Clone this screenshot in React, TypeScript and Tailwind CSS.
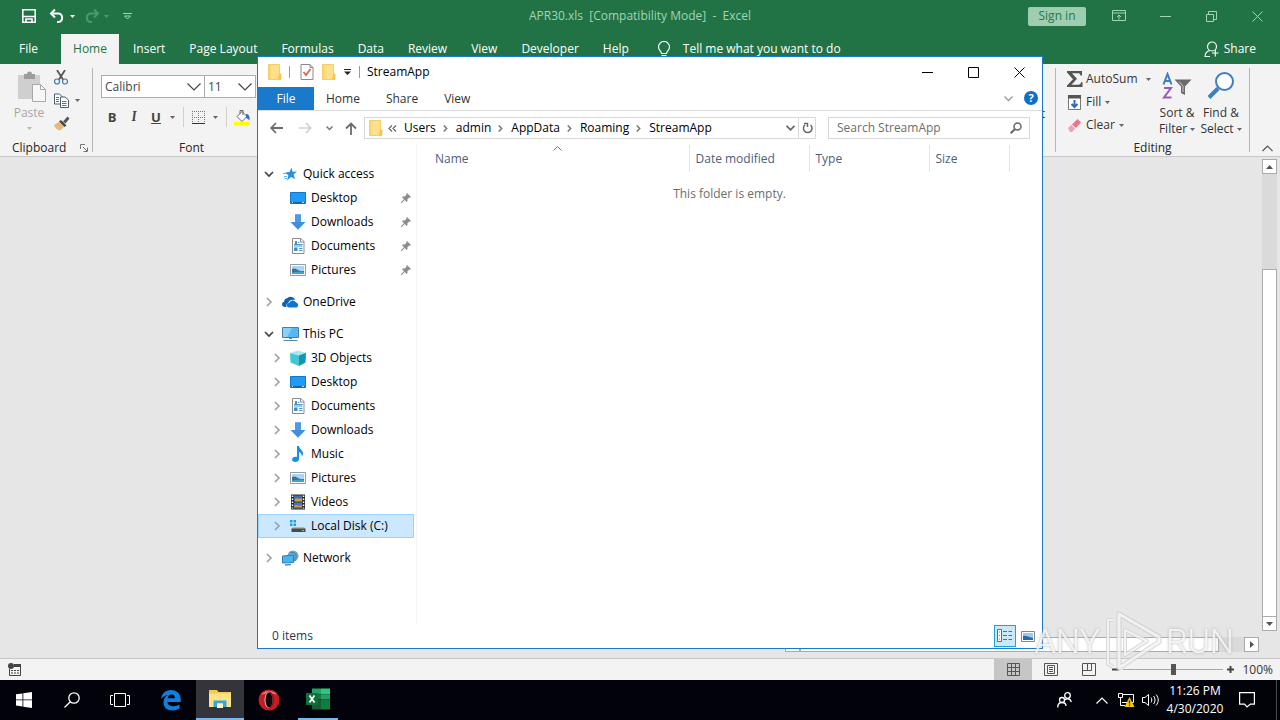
import React, { useState } from 'react';

interface IconProps {
  className?: string;
}

/* ---------- small shared glyphs ---------- */

const Caret = ({ className = 'text-[#666666]' }: IconProps) => (
  <svg width="5" height="3" viewBox="0 0 5 3" className={`shrink-0 ${className}`}>
    <path d="M0 0h5L2.5 3z" fill="currentColor" />
  </svg>
);

const Chevron = ({ open = false }: { open?: boolean }) => (
  <svg width="10" height="10" viewBox="0 0 10 10" fill="none" className="shrink-0">
    {open ? (
      <path d="M1 3l4 4 4-4" stroke="#404040" strokeWidth="1.7" />
    ) : (
      <path d="M3 1l4 4-4 4" stroke="#a0a0a0" strokeWidth="1.7" />
    )}
  </svg>
);

const FolderIcon = () => (
  <svg width="14" height="16" viewBox="0 0 14 16" className="shrink-0">
    <path d="M.5.500h11V10H13v5.500H.5z" fill="#ffe08a" stroke="#ecc55a" strokeWidth=".8" />
    <path d="M.5 1h2v14h-2z" fill="#fbd36b" />
    <path d="M11 10h2v5.500h-3z" fill="#f5c451" />
  </svg>
);

/* ---------- tree icons ---------- */

const StarIcon = () => (
  <svg width="16" height="16" viewBox="0 0 16 16">
    <path d="M9.500 1.500l1 4.300 4.500-.3-3.500 3.100 1.700 4.400L9 10.900 5 14.500l1.400-5L3 6.500l4.500-.4z" fill="#2a8fdc" />
    <path d="M1 7.500h4M2 10.500h3M2.500 12.500h2.500" stroke="#63b8f0" />
  </svg>
);

const DesktopIcon = () => (
  <svg width="16" height="16" viewBox="0 0 16 16">
    <path d="M.5 2.500h15v11H.5z" fill="#1e9bf5" stroke="#1378c8" />
    <path d="M1 12h14v1.500H1z" fill="#0d65b0" />
    <path d="M2 12.500h1M12 12.500h2" stroke="#bfe3ff" />
  </svg>
);

const DownloadIcon = () => (
  <svg width="16" height="16" viewBox="0 0 16 16">
    <path d="M5 .5h6V8h4.500L8 15.700.5 8H5z" fill="#3f8fdd" />
    <path d="M5 .5h6V8H5z" fill="#4a9ae4" />
  </svg>
);

const DocumentIcon = () => (
  <svg width="16" height="16" viewBox="0 0 16 16" fill="none">
    <path d="M2.500.500h8.500l3 3v12H2.500z" fill="#fff" stroke="#8a8a8a" />
    <path d="M10.500.500V4H14" stroke="#8a8a8a" />
    <path d="M5 3h2v3H5zM4 9.500h3.500V13H4z" fill="#3f8fc8" />
    <path d="M8 4.500h1.500M4 6.500h8.500M4 8h8.500M9 10.500h3.500M9 12.500h3.500" stroke="#4a95c8" />
  </svg>
);

const PictureIcon = () => (
  <svg width="16" height="16" viewBox="0 0 16 16">
    <path d="M.5 2.500h15v11H.5z" fill="#fff" stroke="#9a9a9a" />
    <path d="M2 4h12v8H2z" fill="#a9d4f5" />
    <path d="M2 7c3-1.500 5 .5 7 1.500s4 .5 5 .5v3H2z" fill="#39738f" />
    <path d="M2 10.500c4-1 8-1 12-.5v2H2z" fill="#4c9bd3" />
  </svg>
);

const CloudIcon = () => (
  <svg width="17" height="16" viewBox="0 0 17 16">
    <path d="M2.500 13A2.700 2.700 0 0 1 2 7.700 4.300 4.300 0 0 1 5.500 4a5 5 0 0 1 7.800 2C9 5 6.500 7 6.300 9.300 4.500 9.500 4 11.500 4.600 13z" fill="#0a64b4" />
    <path d="M7 13.500a2.300 2.300 0 0 1 .2-4.600A3.700 3.700 0 0 1 14 8.500a2.600 2.600 0 0 1 .5 5z" fill="#0f74cc" />
  </svg>
);

const PcIcon = () => (
  <svg width="17" height="16" viewBox="0 0 17 16">
    <path d="M.5 1.500h16v10H.5z" fill="#56b7f5" stroke="#4a7ea6" />
    <path d="M1 2h9L5 11H1z" fill="#8bd0fb" />
    <path d="M1.500 14.500h14M7 12.500h3" stroke="#5b86a8" />
  </svg>
);

const CubeIcon = () => (
  <svg width="16" height="16" viewBox="0 0 16 16">
    <path d="M0 3l7.500-2.500L16 2.800 9 5.500z" fill="#a6e8ef" />
    <path d="M0 3l9 2.500V16L.5 12.500z" fill="#45c6d8" />
    <path d="M16 2.800L9 5.500V16l6.500-3.500z" fill="#1595ab" />
  </svg>
);

const MusicIcon = () => (
  <svg width="16" height="16" viewBox="0 0 16 16">
    <path d="M7 0h2c.2 3 4 4 4 7.500 0 1.500-.7 2.500-1.200 3C12 8 10.500 6.500 9 6v7c0 1.700-1.600 3-3.600 3S2 15 2 13.500 3.700 10.700 5.500 10.700c.6 0 1 .1 1.500.3z" fill="#148fe6" />
  </svg>
);

const VideoIcon = () => (
  <svg width="16" height="16" viewBox="0 0 16 16">
    <path d="M1 .5h14v15H1z" fill="#2b2b2b" />
    <path d="M4 1.500h8v6H4z" fill="#3e6fae" />
    <path d="M4 8.500h8v6H4z" fill="#5172c2" />
    <path d="M5 5c2-2 4 1 7-1v3.500H5zM4 12c3-2 5 1 8-1v2H4z" fill="#c9a23a" />
    <path d="M2.500 1.500v13M13.500 1.500v13" stroke="#fff" strokeWidth="1.500" strokeDasharray="1.500 1.500" />
  </svg>
);

const DiskIcon = () => (
  <svg width="16" height="16" viewBox="0 0 16 16">
    <path d="M0 2h2.500v2.500H0zM3.500 2H6v2.500H3.500zM0 5.500h2.500V8H0zM3.500 5.500H6V8H3.500z" fill="#1ba1e2" />
    <path d="M3 9h11l1.500 2H1.500z" fill="#b8b8b8" />
    <path d="M1.500 10.500h14V14h-14z" fill="#4a4a4a" />
    <path d="M12 12h2v1h-2z" fill="#6fe06f" />
  </svg>
);

const NetworkIcon = () => (
  <svg width="17" height="16" viewBox="0 0 17 16">
    <circle cx="11" cy="6" r="5.500" fill="#6da9cc" />
    <path d="M8 2c3 1 5 0 6 3s-2 4-1 6" stroke="#3f7ba6" fill="none" />
    <path d="M.5 6l11-1v7.500l-11 .5z" fill="#4bb4f0" stroke="#2b7db2" />
    <path d="M3 15l6-.5" stroke="#4a8fbe" strokeWidth="1.500" />
  </svg>
);

const PinIcon = () => (
  <svg width="10" height="10" viewBox="0 0 10 10" className="shrink-0">
    <path d="M6 0l4 4-1 .8-.8-.2L6.300 6.500l.2 1.700-.9.900-2-2L.8 10 0 9.900l.2-.8L3 6.300.9 4.300l1-.9 1.700.2 1.900-1.900-.2-.9z" fill="#8c8c8c" />
  </svg>
);

/* ---------- Excel ---------- */

const menuTabs = ['Insert', 'Page Layout', 'Formulas', 'Data', 'Review', 'View', 'Developer', 'Help'];

const ExcelTitleBar = () => (
  <header className="grid h-[34px] grid-cols-[1fr_auto_1fr] items-center pb-[2px] text-[#a2d5b5]">
    <div className="flex items-center pl-[21px] text-white">
      <button aria-label="Save">
        <svg width="16" height="16" viewBox="0 0 16 16" fill="none" stroke="currentColor" strokeWidth="1.600">
          <path d="M1.800 1.800h12.400v12.400H1.800zM2 8.500h12M5 14v-3h6v3" />
        </svg>
      </button>
      <button aria-label="Undo" className="ml-3 flex items-center gap-1">
        <svg width="17" height="16" viewBox="0 0 17 16" fill="none" stroke="currentColor" strokeWidth="2">
          <path d="M6 1.500L2 5.500l4 4M2.500 5.500h7a4.300 4.300 0 0 1 0 8.500H8" />
        </svg>
        <Caret className="text-white" />
      </button>
      <button aria-label="Redo" className="ml-2 flex items-center gap-1 text-[#4c9a6c]">
        <svg width="17" height="16" viewBox="0 0 17 16" fill="none" stroke="currentColor" strokeWidth="2">
          <path d="M11 1.500l4 4-4 4M14.500 5.500h-7a4.300 4.300 0 0 0 0 8.500H9" />
        </svg>
        <Caret className="text-[#4c9a6c]" />
      </button>
      <button aria-label="Customize Quick Access Toolbar" className="ml-[14px]">
        <svg width="9" height="8" viewBox="0 0 9 8" fill="none" stroke="#a2d5b5">
          <path d="M0 1.500h9M1.500 4h6L4.500 7z" />
        </svg>
      </button>
    </div>
    <h1 className="whitespace-pre">APR30.xls  [Compatibility Mode]  -  Excel</h1>
    <div className="flex items-center justify-end">
      <button className="mr-[10px] h-[19px] w-[58px] rounded-[2px] bg-[#9fcdb1] leading-4 text-[#267a4b]">Sign in</button>
      <button aria-label="Ribbon Display Options" className="flex w-[46px] justify-center">
        <svg width="14" height="12" viewBox="0 0 14 12" fill="none" stroke="currentColor">
          <path d="M.5.500h13v10H.5zM.5 3h13M7 9.500V5M5 7l2-2 2 2" />
        </svg>
      </button>
      <button aria-label="Minimize" className="flex w-[46px] justify-center">
        <svg width="11" height="11" viewBox="0 0 11 11" stroke="currentColor"><path d="M0 5.500h11" /></svg>
      </button>
      <button aria-label="Restore" className="flex w-[46px] justify-center">
        <svg width="11" height="11" viewBox="0 0 11 11" fill="none" stroke="currentColor">
          <path d="M.5 3.500h7v7h-7zM2.500 3V.500h8v8H8" />
        </svg>
      </button>
      <button aria-label="Close" className="flex w-[46px] justify-center">
        <svg width="11" height="11" viewBox="0 0 11 11" stroke="currentColor"><path d="M.5.500l10 10M10.500.500l-10 10" /></svg>
      </button>
    </div>
  </header>
);

const ExcelTabs = () => (
  <nav className="flex h-[30px] text-white">
    <button className="w-[61px] pr-1">File</button>
    <button className="mr-[2px] w-[58px] bg-[#f3f3f3] text-[#217346]">Home</button>
    {menuTabs.map((tab) => (
      <button key={tab} className="px-3">{tab}</button>
    ))}
    <button className="ml-4 flex items-center gap-3">
      <svg width="14" height="17" viewBox="0 0 14 17" fill="none" stroke="currentColor" strokeWidth="1.200">
        <path d="M4.500 12.500c0-2-3-3-3-6.500a5.500 5.500 0 0 1 11 0c0 3.500-3 4.500-3 6.500zM4.500 14.500h5M5.500 16.400h3" />
      </svg>
      Tell me what you want to do
    </button>
    <button className="mr-6 ml-auto flex items-center gap-1">
      <svg width="16" height="17" viewBox="0 0 16 17" fill="none" stroke="currentColor" strokeWidth="1.200">
        <circle cx="8" cy="5.500" r="4.500" />
        <path d="M1 16c0-4 2.500-6 5-6.500M8 12h6.500M11.300 9v6.500M1 15.500h5" />
      </svg>
      Share
    </button>
  </nav>
);

const ClipboardGroup = () => (
  <section className="my-1 flex w-[93px] flex-col border-r border-[#b5b5b5]">
    <div className="flex flex-1">
      <button className="flex w-[58px] flex-col items-center pt-[3px] text-[#a6a6a6]">
        <svg width="29" height="32" viewBox="0 0 29 32" className="ml-1">
          <path d="M1 4h22v24H1z" fill="#cfcfcf" />
          <path d="M7 3h3a2.500 2.500 0 0 1 5 0h3v5H7z" fill="#9c9c9c" />
          <path d="M15.500 13.500h8l5 5v12h-13z" fill="#f7f7f7" stroke="#a8a8a8" />
          <path d="M23.500 13.500v5h5" fill="none" stroke="#a8a8a8" />
        </svg>
        <span className="mt-[2px]">Paste</span>
        <Caret className="mt-[6px] text-[#b8b8b8]" />
      </button>
      <div className="-ml-1 flex flex-col gap-2 pt-[2px]">
        <button aria-label="Cut">
          <svg width="14" height="15" viewBox="0 0 14 15" fill="none">
            <path d="M3 0l6 9.500M11 0L5 9.500" stroke="#555" strokeWidth="1.800" />
            <circle cx="3" cy="11.500" r="2.500" stroke="#3b78b5" strokeWidth="1.200" />
            <circle cx="11" cy="11.500" r="2.500" stroke="#3b78b5" strokeWidth="1.200" />
          </svg>
        </button>
        <button aria-label="Copy" className="flex items-center gap-[6px]">
          <svg width="15" height="15" viewBox="0 0 15 15" fill="none">
            <path d="M.5 1h5l3 3v7h-8z" fill="#fff" stroke="#4b5f73" />
            <path d="M6.500 4h4.500l3.500 3v7.500h-8z" fill="#fff" stroke="#4b5f73" />
            <path d="M2 4.500h3M2 6.500h3M2 8.500h3M8 8.500h4.500M8 10.500h4.500M8 12.500h4.500" stroke="#3b78b5" />
          </svg>
          <Caret />
        </button>
        <button aria-label="Format Painter">
          <svg width="16" height="15" viewBox="0 0 16 15">
            <path d="M0 9l5-3 5 5-4 3.500c-2-.5-5-2-6-5.500z" fill="#e9b872" />
            <path d="M5 5.500l2-1.500 5.500 5.500L10.500 11z" fill="#444" />
            <path d="M9 5.500L13.500.500l2 2L11.500 7.500z" fill="#555" />
          </svg>
        </button>
      </div>
    </div>
    <div className="-mb-1 flex h-4 items-center justify-between pr-1 pl-3 text-[#262626]">
      Clipboard
      <svg width="8" height="8" viewBox="0 0 8 8" fill="none" stroke="#777">
        <path d="M.5 5V.500H5M3 3l4 4M7.500 3.500v4h-4" />
      </svg>
    </div>
  </section>
);

const FontGroup = () => (
  <section className="my-1 flex w-[197px] flex-col pl-2">
    <div className="flex pt-[7px] text-[#444444]">
      <label className="relative flex items-center">
        <select aria-label="Font" className="h-[23px] w-[104px] appearance-none border border-[#ababab] bg-white pl-[3px]">
          <option>Calibri</option>
        </select>
        <svg width="14" height="8" viewBox="0 0 14 8" className="pointer-events-none absolute right-1" fill="none" stroke="#444" strokeWidth="1.200">
          <path d="M.5.500L7 7l6.500-6.500" />
        </svg>
      </label>
      <label className="relative -ml-px flex items-center">
        <select aria-label="Font Size" className="h-[23px] w-[52px] appearance-none border border-[#ababab] bg-white pl-[3px]">
          <option>11</option>
        </select>
        <svg width="14" height="8" viewBox="0 0 14 8" className="pointer-events-none absolute right-1" fill="none" stroke="#444" strokeWidth="1.200">
          <path d="M.5.500L7 7l6.500-6.500" />
        </svg>
      </label>
    </div>
    <div className="flex h-[38px] items-center text-[13px] text-[#444444]">
      <button className="w-[22px] font-bold">B</button>
      <button className="w-[22px] font-serif font-bold italic">I</button>
      <button className="w-[22px] font-bold underline">U</button>
      <Caret className="ml-[3px] text-[#666666]" />
      <span className="ml-2 h-5 w-px bg-[#d0d0d0]" />
      <button aria-label="Borders" className="ml-2 flex items-center gap-2">
        <svg width="13" height="13" viewBox="0 0 13 13" fill="none" stroke="#777">
          <path d="M.5 0v12M6.500 0v12M12.500 0v12M0 .500h13M0 6.500h13" strokeDasharray="1 1" />
          <path d="M0 12.500h13" stroke="#333" />
        </svg>
        <Caret />
      </button>
      <span className="ml-2 h-5 w-px bg-[#d0d0d0]" />
      <button aria-label="Fill Color" className="ml-[7px]">
        <svg width="17" height="17" viewBox="0 0 17 17" fill="none">
          <path d="M3 7.500l5-5 5 5-5 5z" fill="#fff" stroke="#666" />
          <path d="M6 5V1.500h3V6" stroke="#666" />
          <path d="M12 5c3 0 4 2.500 3.500 6.500C14 10 13 9 12 9z" fill="#3b6fb5" />
          <path d="M0 13h16v3.500H0z" fill="#ffff00" />
        </svg>
      </button>
    </div>
    <div className="mt-auto -mb-1 pr-2 text-center leading-4 text-[#262626]">Font</div>
  </section>
);

const EditingGroup = () => (
  <section className="my-1 flex w-[195px] flex-col border-x border-[#b5b5b5]">
    <div className="flex flex-1 pl-[11px] text-[#333333]">
      <div className="mr-1 flex w-[84px] flex-col">
        <button className="flex h-[22px] items-center gap-[3px]">
          <svg width="16" height="16" viewBox="0 0 16 16" fill="none">
            <path d="M0 0h15v4.500h-1.500c-.3-1.800-1-2.300-3-2.300H5l5 5.600-5.500 6H11c2 0 2.700-.8 3-2.500h1.500V16H0v-1.500l6-6.300L0 1.500z" fill="#555" />
          </svg>
          AutoSum
          <Caret className="ml-auto text-[#666666]" />
        </button>
        <button className="flex h-6 items-center gap-1">
          <svg width="15" height="15" viewBox="0 0 15 15" fill="none">
            <path d="M1.500 1.500h12v13h-12z" fill="#fff" stroke="#777" />
            <path d="M1 0h13v3.500H1z" fill="#555" />
            <path d="M7.500 5v7M4.500 9l3 3 3-3" stroke="#2e6db4" strokeWidth="2" />
          </svg>
          Fill
          <Caret />
        </button>
        <button className="flex h-[22px] items-center gap-1">
          <svg width="15" height="15" viewBox="0 0 15 15">
            <path d="M5 6.500L10.500 1l3.500 3.500L9 10z" fill="#e8798c" />
            <path d="M1 10l3.300-3 3.700 3.700L5 14H3z" fill="#f1a3b0" />
          </svg>
          Clear
          <Caret />
        </button>
      </div>
      <button className="flex w-11 flex-col items-center pt-1 leading-4">
        <svg width="30" height="28" viewBox="0 0 30 28" className="mb-[5px] shrink-0" fill="none">
          <path d="M1.500 12.500L5.500 2l4 10.500M3 9h5" stroke="#3f7fbf" strokeWidth="2" />
          <path d="M2 16h7l-7 9.500h7.500" stroke="#9a5ab5" strokeWidth="2" />
          <path d="M12.500 7.500h17l-6.500 7V23l-4-2v-6.500z" fill="#6b6b6b" />
          <path d="M17 9.500l4 4.500v6" stroke="#c9c9c9" />
        </svg>
        <span className="whitespace-nowrap">Sort &amp;</span>
        <span className="flex items-center gap-[3px]">Filter <Caret /></span>
      </button>
      <button className="flex w-11 flex-col items-center pt-1 leading-4">
        <svg width="28" height="28" viewBox="0 0 28 28" className="mb-[5px] shrink-0" fill="none">
          <path d="M11 16.500L2 25.500" stroke="#3f7fbf" strokeWidth="4" />
          <circle cx="17.500" cy="9.500" r="8.500" fill="#fff" stroke="#3f7fbf" strokeWidth="2" />
        </svg>
        <span className="whitespace-nowrap">Find &amp;</span>
        <span className="flex items-center gap-[3px]">Select <Caret /></span>
      </button>
    </div>
    <div className="-mb-1 text-center leading-4 text-[#262626]">Editing</div>
  </section>
);

const Ribbon = () => (
  <div className="flex h-[93px] border-b border-[#c8c8c8] bg-[#f3f3f3]">
    <ClipboardGroup />
    <FontGroup />
    <div className="flex flex-1 items-center justify-end pr-[10px] text-[#262626]">
      <button className="pt-2">Format</button>
    </div>
    <EditingGroup />
    <button aria-label="Collapse the Ribbon" className="flex w-[30px] items-end justify-center pl-1 pb-1">
      <svg width="11" height="7" viewBox="0 0 11 7" fill="none" stroke="#555" strokeWidth="1.200">
        <path d="M.5 6l5-5 5 5" />
      </svg>
    </button>
  </div>
);

const scrollButton = 'flex h-[15px] w-[15px] shrink-0 items-center justify-center border border-[#ababab] bg-white';

const Sheet = () => (
  <main className="flex min-h-0 flex-1 flex-col bg-[#e6e6e6]">
    <div className="flex min-h-0 flex-1 justify-end pt-[2px] pr-[3px]">
      <div className="flex w-[15px] flex-col bg-[#dadada]">
        <button aria-label="Scroll up" className={scrollButton}>
          <svg width="7" height="4" viewBox="0 0 7 4"><path d="M0 4h7L3.500 0z" fill="#555" /></svg>
        </button>
        <div className="h-[95px]" />
        <div className="flex-1 border border-[#ababab] bg-white" />
        <button aria-label="Scroll down" className={`${scrollButton} -mt-px`}>
          <svg width="7" height="4" viewBox="0 0 7 4"><path d="M0 0h7L3.500 4z" fill="#555" /></svg>
        </button>
      </div>
    </div>
    <div className="mt-[6px] mr-[21px] mb-[6px] flex w-[474px] self-end bg-[#dadada]">
      <button aria-label="Scroll left" className={scrollButton}>
        <svg width="4" height="7" viewBox="0 0 4 7"><path d="M4 0v7L0 3.500z" fill="#555" /></svg>
      </button>
      <div className="mr-[25px] flex-1 border border-[#ababab] bg-white" />
      <button aria-label="Scroll right" className={scrollButton}>
        <svg width="4" height="7" viewBox="0 0 4 7"><path d="M0 0v7l4-3.500z" fill="#555" /></svg>
      </button>
    </div>
  </main>
);

const ExcelStatusBar = () => (
  <footer className="flex h-[22px] items-center border-t border-[#c8c8c8] bg-[#f3f3f3] pr-[7px] pl-2 text-[#333333]">
    <button aria-label="Record Macro">
      <svg width="14" height="14" viewBox="0 0 14 14" fill="none">
        <path d="M1.500 6v6.500h11V3H7" stroke="#444" />
        <circle cx="3" cy="3" r="3" fill="#444" />
        <path d="M6 1h7v3H6z" fill="#444" />
        <path d="M3 7.500h8M3 10h8" stroke="#444" strokeDasharray="2 1" />
      </svg>
    </button>
    <button aria-label="Normal" className="ml-auto flex h-full w-[38px] items-center justify-center bg-[#c6c6c6]">
      <svg width="13" height="13" viewBox="0 0 13 13" fill="none" stroke="#555">
        <path d="M.5.500h12v12H.5zM4.500 0v13M8.500 0v13M0 4.500h13M0 8.500h13" />
      </svg>
    </button>
    <button aria-label="Page Layout" className="flex w-[38px] items-center justify-center">
      <svg width="14" height="13" viewBox="0 0 14 13" fill="none" stroke="#555">
        <path d="M.5.500h13v12H.5zM3.500 2.500h7v8h-7zM5 4.500h4M5 6.500h4M5 8.500h4" />
      </svg>
    </button>
    <button aria-label="Page Break Preview" className="flex w-[38px] items-center justify-center">
      <svg width="14" height="13" viewBox="0 0 14 13" fill="none" stroke="#555">
        <path d="M.5.500h13v12H.5zM5.500.500v7M9.500.500v7M.5 7.500h9" />
      </svg>
    </button>
    <button aria-label="Zoom Out" className="ml-1">
      <svg width="7" height="7" viewBox="0 0 7 7" stroke="#444" strokeWidth="2"><path d="M0 3.500h7" /></svg>
    </button>
    <input
      type="range"
      aria-label="Zoom"
      defaultValue={50}
      className="mx-1 h-[11px] w-[100px] appearance-none bg-[linear-gradient(#a6a6a6,#a6a6a6)] bg-[length:100%_1px] bg-center bg-no-repeat [&::-webkit-slider-thumb]:h-[11px] [&::-webkit-slider-thumb]:w-[5px] [&::-webkit-slider-thumb]:appearance-none [&::-webkit-slider-thumb]:bg-[#555555]"
    />
    <button aria-label="Zoom In">
      <svg width="7" height="7" viewBox="0 0 7 7" stroke="#444" strokeWidth="2"><path d="M0 3.500h7M3.500 0v7" /></svg>
    </button>
    <button className="ml-2">100%</button>
  </footer>
);

/* ---------- Explorer ---------- */

interface TreeItem {
  id: string;
  label: string;
  icon: React.ReactNode;
  root?: boolean;
  open?: boolean;
  pinned?: boolean;
}

const treeGroups: TreeItem[][] = [
  [
    { id: 'quick', label: 'Quick access', icon: <StarIcon />, root: true, open: true },
    { id: 'q-desktop', label: 'Desktop', icon: <DesktopIcon />, pinned: true },
    { id: 'q-downloads', label: 'Downloads', icon: <DownloadIcon />, pinned: true },
    { id: 'q-documents', label: 'Documents', icon: <DocumentIcon />, pinned: true },
    { id: 'q-pictures', label: 'Pictures', icon: <PictureIcon />, pinned: true },
  ],
  [{ id: 'onedrive', label: 'OneDrive', icon: <CloudIcon />, root: true }],
  [
    { id: 'pc', label: 'This PC', icon: <PcIcon />, root: true, open: true },
    { id: 'objects', label: '3D Objects', icon: <CubeIcon /> },
    { id: 'desktop', label: 'Desktop', icon: <DesktopIcon /> },
    { id: 'documents', label: 'Documents', icon: <DocumentIcon /> },
    { id: 'downloads', label: 'Downloads', icon: <DownloadIcon /> },
    { id: 'music', label: 'Music', icon: <MusicIcon /> },
    { id: 'pictures', label: 'Pictures', icon: <PictureIcon /> },
    { id: 'videos', label: 'Videos', icon: <VideoIcon /> },
    { id: 'disk', label: 'Local Disk (C:)', icon: <DiskIcon /> },
  ],
  [{ id: 'network', label: 'Network', icon: <NetworkIcon />, root: true }],
];

const Tree = () => {
  const [selected, setSelected] = useState('disk');

  return (
    <nav className="flex w-[159px] flex-col gap-2 border-r border-[#f3f3f3] pt-[17px] pr-[2px]">
      {treeGroups.map((group) => (
        <ul key={group[0].id}>
          {group.map((item) => (
            <li key={item.id}>
              <button
                onClick={() => setSelected(item.id)}
                className={`flex h-6 w-full items-center border pr-[2px] text-left ${item.root ? 'pl-[5px]' : 'pl-[13px]'} ${
                  selected === item.id ? 'border-[#99d1ff] bg-[#cce8ff]' : 'border-transparent'
                }`}
              >
                <span className="w-[10px] shrink-0">{!item.pinned && <Chevron open={item.open} />}</span>
                <span className="ml-[7px] flex w-[18px] shrink-0 justify-center">{item.icon}</span>
                <span className="ml-1 flex-1 whitespace-nowrap">{item.label}</span>
                {item.pinned && <PinIcon />}
              </button>
            </li>
          ))}
        </ul>
      ))}
    </nav>
  );
};

const crumbs = ['Users', 'admin', 'AppData', 'Roaming', 'StreamApp'];

const AddressRow = () => (
  <div className="flex h-[34px] items-center pr-3 pl-3">
    <button aria-label="Back">
      <svg width="13" height="12" viewBox="0 0 13 12" fill="none" stroke="#6b6b6b" strokeWidth="1.800">
        <path d="M6 1L1.200 6 6 11M1.500 6H13" />
      </svg>
    </button>
    <button aria-label="Forward" className="ml-4">
      <svg width="13" height="12" viewBox="0 0 13 12" fill="none" stroke="#d0d0d0" strokeWidth="1.500">
        <path d="M7 1l4.800 5L7 11M11.500 6H0" />
      </svg>
    </button>
    <button aria-label="Recent locations" className="ml-[14px]">
      <svg width="7" height="5" viewBox="0 0 7 5" fill="none" stroke="#777" strokeWidth="1.500"><path d="M.5.500l3 3 3-3" /></svg>
    </button>
    <button aria-label="Up" className="ml-3">
      <svg width="12" height="13" viewBox="0 0 12 13" fill="none" stroke="#6b6b6b" strokeWidth="1.800">
        <path d="M1 6.500l5-5 5 5M6 2v11" />
      </svg>
    </button>
    <div className="ml-[7px] flex h-[22px] flex-1 items-center border border-[#d9d9d9] pl-1">
      <FolderIcon />
      <svg width="9" height="7" viewBox="0 0 9 7" fill="none" stroke="#666" strokeWidth="1.200" className="mr-[2px] ml-[5px]">
        <path d="M4 .500l-3 3 3 3M8 .500l-3 3 3 3" />
      </svg>
      {crumbs.map((crumb, i) => (
        <React.Fragment key={crumb}>
          <button className="ml-[5px]">{crumb}</button>
          {i < crumbs.length - 1 && (
            <svg width="5" height="7" viewBox="0 0 5 7" fill="none" stroke="#777" strokeWidth="1.500" className="mr-[3px] ml-[7px]">
              <path d="M.7.500l3 3-3 3" />
            </svg>
          )}
        </React.Fragment>
      ))}
      <button aria-label="Previous locations" className="mr-[3px] ml-auto">
        <svg width="9" height="6" viewBox="0 0 9 6" fill="none" stroke="#666" strokeWidth="1.800"><path d="M.5.800l4 4 4-4" /></svg>
      </button>
      <button aria-label="Refresh" className="flex h-full w-[17px] items-center justify-center border-l border-[#d9d9d9]">
        <svg width="11" height="12" viewBox="0 0 11 12" fill="none" stroke="#666" strokeWidth="1.500">
          <path d="M8.500 3A4.300 4.300 0 1 1 3 3M2 1.500h3.500V5" />
        </svg>
      </button>
    </div>
    <label className="ml-3 flex h-[22px] w-[202px] items-center border border-[#d9d9d9] pr-[7px] pl-2">
      <input aria-label="Search" placeholder="Search StreamApp" className="min-w-0 flex-1 outline-none placeholder:text-[#6d6d6d]" />
      <svg width="12" height="12" viewBox="0 0 12 12" fill="none" stroke="#666">
        <circle cx="7.500" cy="4.500" r="3.500" strokeWidth="1.500" />
        <path d="M5 7L.7 11.300" strokeWidth="2" />
      </svg>
    </label>
  </div>
);

const ExplorerWindow = () => (
  <div className="absolute top-[56px] left-[257px] flex h-[593px] w-[786px] flex-col border border-[#1979ca] bg-white text-black">
    <div className="flex h-[30px] shrink-0 items-center pl-[10px]">
      <FolderIcon />
      <span className="ml-[7px] h-3 w-px bg-[#9a9a9a]" />
      <button aria-label="Properties" className="ml-[10px]">
        <svg width="14" height="16" viewBox="0 0 14 16" fill="none">
          <path d="M1 .500h9l3 3v12H1z" fill="#fff" stroke="#8a8a8a" />
          <path d="M10 .500v3h3" stroke="#8a8a8a" />
          <path d="M3.500 8l2.500 3 4.500-6" stroke="#d9664a" strokeWidth="1.800" />
        </svg>
      </button>
      <button aria-label="New folder" className="ml-2"><FolderIcon /></button>
      <button aria-label="Customize Quick Access Toolbar" className="ml-2">
        <svg width="7" height="6" viewBox="0 0 7 6"><path d="M0 0h7v1H0zM0 2.500h7L3.500 6z" fill="#222" /></svg>
      </button>
      <span className="ml-2 h-3 w-px bg-[#9a9a9a]" />
      <h2 className="ml-[7px]">StreamApp</h2>
      <div className="ml-auto flex">
        <button aria-label="Minimize" className="flex w-[46px] justify-center">
          <svg width="11" height="11" viewBox="0 0 11 11" stroke="#000"><path d="M0 5.500h11" /></svg>
        </button>
        <button aria-label="Maximize" className="flex w-[46px] justify-center">
          <svg width="11" height="11" viewBox="0 0 11 11" fill="none" stroke="#000"><path d="M.5.500h10v10H.5z" /></svg>
        </button>
        <button aria-label="Close" className="flex w-[46px] justify-center">
          <svg width="11" height="11" viewBox="0 0 11 11" stroke="#000"><path d="M.5.500l10 10M10.500.500l-10 10" /></svg>
        </button>
      </div>
    </div>

    <div className="flex h-6 shrink-0 border-b border-[#dcdcdc] text-[#333333]">
      <button className="h-[23px] w-14 bg-[#1979ca] text-white">File</button>
      <button className="px-3">Home</button>
      <button className="px-[14px]">Share</button>
      <button className="px-3">View</button>
      <button aria-label="Expand the Ribbon" className="ml-auto">
        <svg width="9" height="6" viewBox="0 0 9 6" fill="none" stroke="#999" strokeWidth="1.300"><path d="M.5.500l4 4 4-4" /></svg>
      </button>
      <button
        aria-label="Help"
        className="mt-1 mr-1 ml-[11px] h-[14px] w-[14px] rounded-full bg-[#0f6fc8] text-[11px] leading-[14px] font-bold text-white"
      >
        ?
      </button>
    </div>

    <AddressRow />

    <div className="flex min-h-0 flex-1">
      <Tree />
      <table className="h-12 flex-1 self-start">
        <thead>
          <tr className="h-[27px] text-left text-[#4c607a]">
            <th className="relative w-[272px] border-r border-[#e5e5e5] pl-[18px] font-normal">
              Name
              <svg width="9" height="5" viewBox="0 0 9 5" fill="none" stroke="#777" className="absolute top-px left-1/2">
                <path d="M.5 4.500l4-4 4 4" />
              </svg>
            </th>
            <th className="w-[120px] border-r border-[#e5e5e5] pl-[6px] font-normal">Date modified</th>
            <th className="w-[120px] border-r border-[#e5e5e5] pl-[6px] font-normal">Type</th>
            <th className="w-20 border-r border-[#e5e5e5] pl-[6px] font-normal">Size</th>
            <td />
          </tr>
        </thead>
        <tbody>
          <tr className="h-11">
            <td colSpan={5} className="text-center text-[#6d6d6d]">This folder is empty.</td>
          </tr>
        </tbody>
      </table>
    </div>

    <div className="flex h-6 shrink-0 items-center pr-[3px] pl-[14px] text-[#1e395b]">
      0 items
      <button aria-label="Details" className="mr-px ml-auto flex h-[22px] w-[22px] items-center justify-center border border-[#26a0da] bg-[#cbe8f6]">
        <svg width="16" height="14" viewBox="0 0 16 14" fill="none" stroke="#667">
          <path d="M.5.500h4v12h-4z" fill="#fff" />
          <path d="M2 3h1M2 6.500h1M2 10h1" stroke="#c55" />
          <path d="M6 2.500h4M11.500 2.500H15M6 6.500h4M11.500 6.500H15M6 10.500h4M11.500 10.500H15" />
        </svg>
      </button>
      <button aria-label="Large icons" className="flex h-[22px] w-[22px] items-center justify-center">
        <svg width="14" height="11" viewBox="0 0 14 11">
          <path d="M.5.500h13v10H.5z" fill="#fff" stroke="#888" />
          <path d="M2 2h10v7H2z" fill="#9ccbf0" />
          <path d="M2 5c3-1 5 1 10 2v2H2z" fill="#2b6aa8" />
        </svg>
      </button>
    </div>
  </div>
);

/* ---------- Taskbar ---------- */

const taskSlot = 'flex h-10 w-12 items-center justify-center';

const Taskbar = () => (
  <footer className="flex h-10 shrink-0 items-center bg-[#02030a] text-white">
    <button aria-label="Start" className={taskSlot}>
      <svg width="16" height="16" viewBox="0 0 16 16" fill="#fff">
        <path d="M0 2.300L6.500 1.400v6.100H0zM7.300 1.300L16 0v7.500H7.300zM0 8.300h6.500v6.200L0 13.600zM7.300 8.300H16V16l-8.700-1.300z" />
      </svg>
    </button>
    <button aria-label="Search" className={taskSlot}>
      <svg width="16" height="16" viewBox="0 0 16 16" fill="none" stroke="#fff" strokeWidth="1.300">
        <circle cx="10" cy="6" r="5.200" />
        <path d="M6.300 9.700L.5 15.500" />
      </svg>
    </button>
    <button aria-label="Task View" className={taskSlot}>
      <svg width="20" height="14" viewBox="0 0 20 14" fill="none" stroke="#fff">
        <path d="M4.500.500h11v13h-11zM3 2.500H.5v9H3M17 2.500h2.500v9H17" />
      </svg>
    </button>
    <div className="ml-[3px] flex gap-px">
      <button aria-label="Microsoft Edge" className={taskSlot}>
        <svg width="20" height="22" viewBox="0 0 20 22">
          <path
            d="M0 10C.7 4.500 4.500 1 10 1c6.500 0 9.800 4.600 9.800 9.800V13H6.500c.2 3 2.800 4.300 6 4.300 2.200 0 4.200-.6 6-1.700v4c-2 1.200-4.400 1.800-7 1.800-5.500 0-9-3-9-8 0-3.200 1.700-6 4.600-7.600C4.500 6.500 1.500 7.700 0 10zM6.600 9.300h7.300C13.900 7 12.800 5.500 10.600 5.500S6.900 7 6.600 9.300z"
            fill="#0f7fe0"
          />
        </svg>
      </button>
      <button aria-label="File Explorer" className={`${taskSlot} border-b-2 border-[#76b9ed] bg-[#34353b]`}>
        <svg width="22" height="18" viewBox="0 0 22 18">
          <path d="M0 0h8l1.500 2H22v15H0z" fill="#f2c94c" />
          <path d="M0 3.500h22V17H0z" fill="#fde28a" />
          <path d="M4.500 17V10.500h13V17h-3.500v-3.500H8V17z" fill="#36a5dd" />
          <path d="M8 13.500h6V18H8z" fill="#fff3c4" />
        </svg>
      </button>
      <button aria-label="Opera" className={taskSlot}>
        <svg width="22" height="22" viewBox="0 0 22 22">
          <circle cx="11" cy="11" r="10.500" fill="#c81b22" />
          <path d="M3 6a10 10 0 0 1 16 0c-4-2.500-12-2.500-16 0z" fill="#ef7f80" />
          <ellipse cx="11" cy="11" rx="4.800" ry="8.500" fill="#8a1016" />
          <ellipse cx="10.500" cy="11" rx="4" ry="7.800" fill="#f4d8d8" />
          <ellipse cx="11" cy="11" rx="3.600" ry="7.500" fill="#16060a" />
        </svg>
      </button>
      <button aria-label="Excel" className="flex h-10 w-12 justify-center">
        <span className="flex h-10 w-10 items-center justify-center border-b-2 border-[#76b9ed]">
          <svg width="24" height="22" viewBox="0 0 24 22">
            <path d="M6 .500h9v6H6z" fill="#21a366" />
            <path d="M15 .500h9v6h-9z" fill="#33c481" />
            <path d="M6 6.500h9v5H6z" fill="#107c41" />
            <path d="M15 6.500h9v5h-9z" fill="#21a366" />
            <path d="M6 11.500h9v10H6z" fill="#185c37" />
            <path d="M15 11.500h9v10h-9z" fill="#107c41" />
            <path d="M0 5h12v12H0z" fill="#10703c" />
            <path d="M3.500 7.500l5 7M8.500 7.500l-5 7" stroke="#fff" strokeWidth="1.800" />
          </svg>
        </span>
      </button>
    </div>

    <div className="ml-auto flex items-center pr-[3px]">
      <button aria-label="People" className="mr-6">
        <svg width="15" height="16" viewBox="0 0 15 16" fill="none" stroke="#fff" strokeWidth="1.300">
          <circle cx="10.500" cy="3.500" r="2.800" />
          <circle cx="5" cy="8" r="2.500" />
          <path d="M.7 15.500c0-3 1.800-5 4.300-5s4 1.500 4 3.500M8 8c1-1.500 5-2.500 6.300 2" />
        </svg>
      </button>
      <button aria-label="Show hidden icons" className="mr-[10px]">
        <svg width="12" height="7" viewBox="0 0 12 7" fill="none" stroke="#fff" strokeWidth="1.200"><path d="M.5 6.500L6 1l5.500 5.500" /></svg>
      </button>
      <button aria-label="Network" className="mr-[7px]">
        <svg width="17" height="16" viewBox="0 0 17 16" fill="none" stroke="#fff">
          <path d="M5 2.500h10.500v8H4M.5 1.500h4v4h-4zM2.500 5.500v8H7" />
          <path d="M11.500 5L16.500 15h-10z" fill="#fbc617" stroke="none" />
          <path d="M11.500 8.500v3M11.500 12.500v1.200" stroke="#222" strokeWidth="1.300" />
        </svg>
      </button>
      <button aria-label="Volume" className="mr-2">
        <svg width="17" height="14" viewBox="0 0 17 14" fill="none" stroke="#fff">
          <path d="M.5 4.500h2.500L6.500 1.500v11L3 9.500H.5zM9 4.500c1 1.500 1 3.500 0 5M11.500 3c2 2.500 2 5.500 0 8M14 1.500c3 3.500 3 7.500 0 11" />
        </svg>
      </button>
      <div className="flex w-14 flex-col items-center leading-[18px]">
        <span className="whitespace-nowrap">11:26 PM</span>
        <span className="whitespace-nowrap">4/30/2020</span>
      </div>
      <button aria-label="Notifications" className="mr-[21px] ml-4">
        <svg width="16" height="16" viewBox="0 0 16 16" fill="none" stroke="#fff" strokeWidth="1.200">
          <path d="M.600.600h14.800v11.500h-4L8 15l-2.500-2.900H.6z" />
        </svg>
      </button>
      <span className="h-10 w-px bg-[#4a4a50]" />
    </div>
  </footer>
);

const Watermark = () => (
  <div
    aria-hidden="true"
    className="pointer-events-none absolute right-[46px] bottom-[46px] flex items-center gap-1 font-['Roboto',sans-serif] text-[34px] leading-[66px] font-light text-white/80 [text-shadow:0_0_3px_#aaaaaa]"
  >
    <span>ANY</span>
    <svg width="58" height="66" viewBox="0 0 58 66" fill="none" strokeLinejoin="round">
      <g opacity="0.8">
        <path d="M15 6L55 29v5L15 60z" stroke="#cccccc" strokeWidth="5" />
        <path d="M15 6L55 29v5L15 60z" stroke="#f4f4f4" strokeWidth="3" />
        <path d="M21 22l22 11-22 14zM9 12H4v44l5 3" stroke="#d2d2d2" strokeWidth="4" />
        <path d="M21 22l22 11-22 14zM9 12H4v44l5 3" stroke="#f4f4f4" strokeWidth="2" />
      </g>
    </svg>
    <span>RUN</span>
  </div>
);

const App = () => {
  return (
    <div className="relative flex h-screen flex-col overflow-hidden bg-[#217346] font-['Open_Sans','Noto_Sans',sans-serif] text-[12px] leading-4">
      <ExcelTitleBar />
      <ExcelTabs />
      <Ribbon />
      <Sheet />
      <ExcelStatusBar />
      <Taskbar />
      <ExplorerWindow />
      <Watermark />
    </div>
  );
};

export default App;
